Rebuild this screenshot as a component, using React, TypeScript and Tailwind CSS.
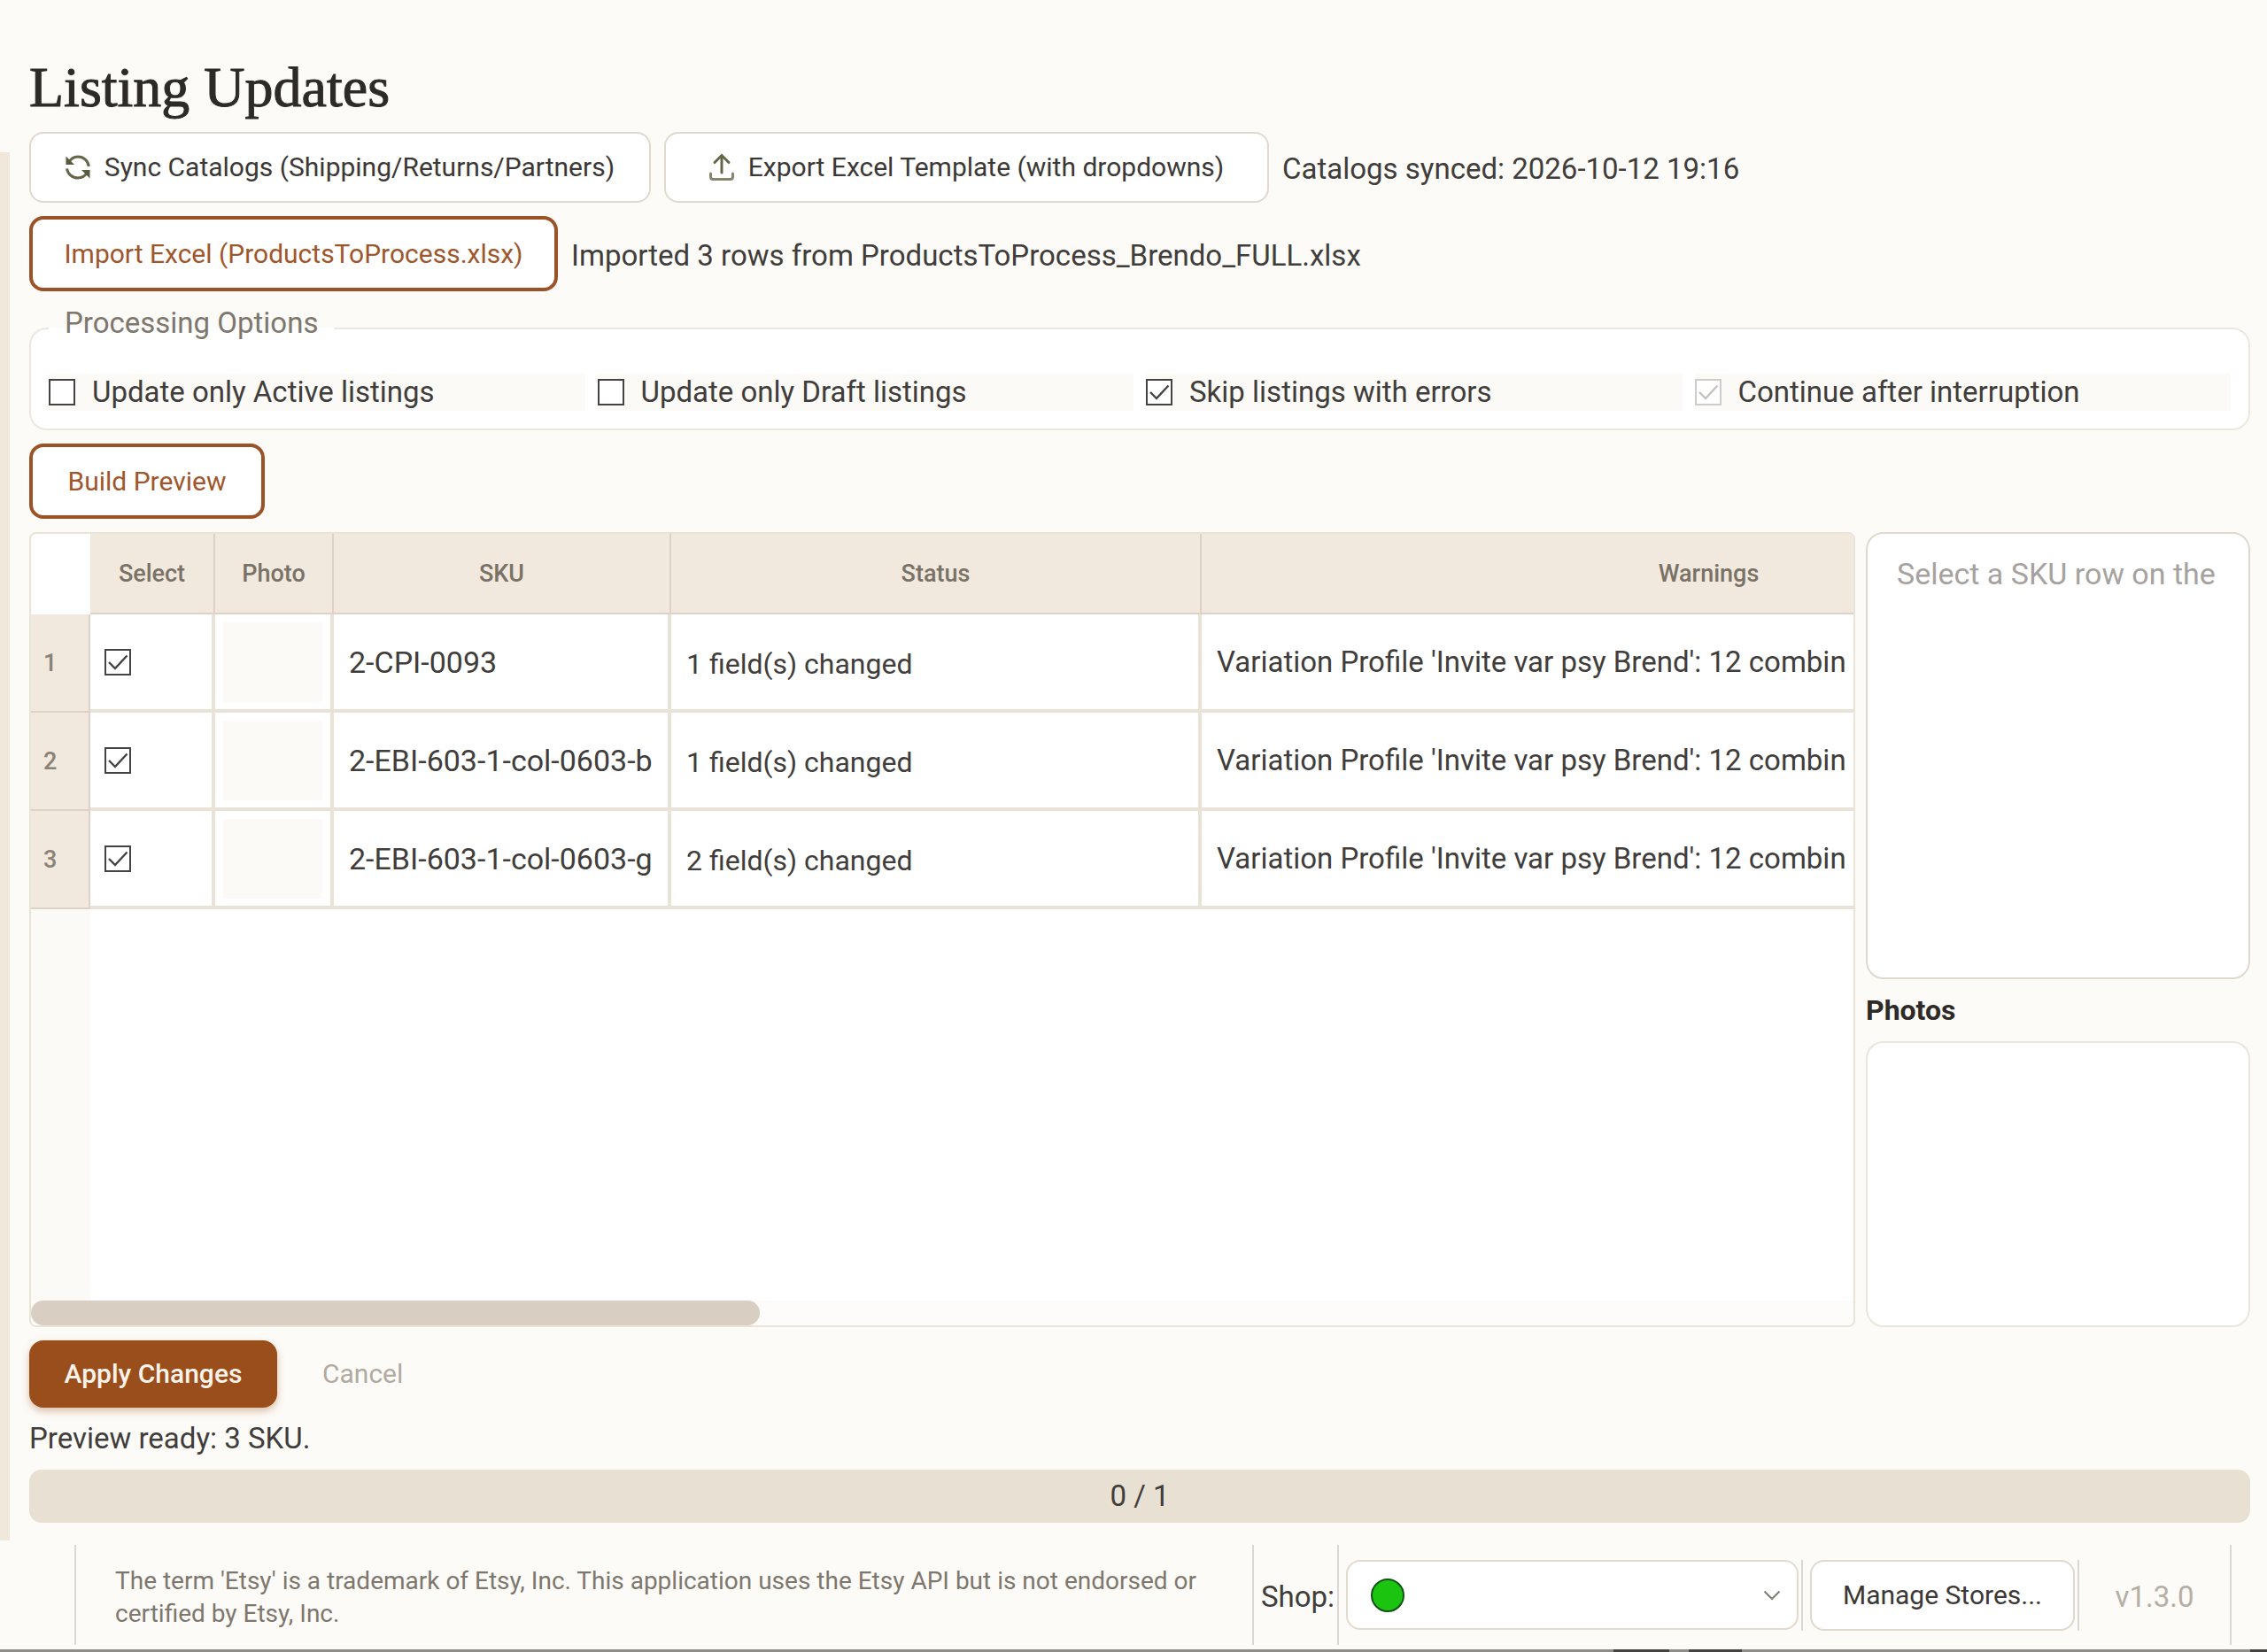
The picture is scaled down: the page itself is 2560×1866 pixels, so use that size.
import React from "react";

type Row = { sku: string; status: string; warning: string };

const rows: Row[] = [
  { sku: "2-CPI-0093", status: "1 field(s) changed", warning: "Variation Profile 'Invite var psy Brend': 12 combin" },
  { sku: "2-EBI-603-1-col-0603-b", status: "1 field(s) changed", warning: "Variation Profile 'Invite var psy Brend': 12 combin" },
  { sku: "2-EBI-603-1-col-0603-g", status: "2 field(s) changed", warning: "Variation Profile 'Invite var psy Brend': 12 combin" },
];

const options = [
  { label: "Update only Active listings", checked: false, disabled: false },
  { label: "Update only Draft listings", checked: false, disabled: false },
  { label: "Skip listings with errors", checked: true, disabled: false },
  { label: "Continue after interruption", checked: true, disabled: true },
];

function SyncIcon() {
  return (
    <svg className="size-7 shrink-0" viewBox="0 0 28 28" fill="none" aria-hidden="true">
      <path d="M3 9.5C5.500 4.500 9.500 2 14 2c6.500 0 11.500 4.500 12.300 11" stroke="#66664a" strokeWidth="3" />
      <path d="M1.500 15.500C2.500 21.500 7.500 26 14 26c4.500 0 8.500-2.500 11-7" stroke="#66664a" strokeWidth="3" />
      <path d="M.5 1.500V11H10z" fill="#5a5a3c" />
      <path d="M27.500 26.500V17H18z" fill="#5a5a3c" />
    </svg>
  );
}

function UploadIcon() {
  return (
    <svg className="h-8 w-7 shrink-0" viewBox="0 0 28 32" fill="none" strokeLinecap="round" aria-hidden="true">
      <path d="M14 22V3M6 10.500L14 2.500l8 8" stroke="#66664a" strokeWidth="3" />
      <path d="M1.500 23v3.500q0 3 3 3h19q3 0 3-3V23" stroke="#85856f" strokeWidth="3" />
    </svg>
  );
}

function CheckBox({ id, label, checked, disabled }: { id: string; label?: string; checked: boolean; disabled?: boolean }) {
  return (
    <span className="relative block size-[30px] shrink-0">
      <input
        id={id}
        type="checkbox"
        aria-label={label}
        defaultChecked={checked}
        disabled={disabled}
        className="peer block size-[30px] appearance-none border-2 border-[#454341] bg-white disabled:border-[#cfcdca]"
      />
      <svg
        viewBox="0 0 30 30"
        fill="none"
        aria-hidden="true"
        className="pointer-events-none absolute inset-0 hidden stroke-[#454341] peer-checked:block peer-disabled:stroke-[#c4c2bf]"
      >
        <path d="M5 15l7 7L25.500 7.500" strokeWidth="2.400" />
      </svg>
    </span>
  );
}

const outline = "flex h-20 items-center justify-center gap-4 rounded-2xl border-2 border-[#e0d9cd] bg-white text-[30px] text-[#3b3836]";
const accent = "h-[85px] rounded-2xl border-4 border-[#9c5227] bg-white text-[30px] text-[#a0562b]";
const head = "border-r-2 border-b-2 border-[#ddd2c5] bg-[#f1e9dd] text-[27px] font-medium text-[#7a7267]";
const cell = "border-r-4 border-b-4 border-[#e8e2d7] bg-white";

export default function App() {
  return (
    <div className="flex min-h-screen flex-col bg-[#fdfbf7] font-['Roboto','Liberation_Sans',sans-serif] text-[33px] leading-10 text-[#403d3b]">
      <div className="flex flex-1">
        <div className="mt-[172px] w-[11px] shrink-0 bg-[#f1e8dc]" />
        <main className="flex min-w-0 flex-1 flex-col gap-[15px] pt-16 pr-[19px] pb-5 pl-[22px]">
          <h1 className="font-['Liberation_Serif',serif] text-[64px] leading-[70px] text-[#2d2a28] [-webkit-text-stroke:1px_#2d2a28]">
            Listing Updates
          </h1>

          <div className="flex items-center gap-[15px]">
            <button type="button" className={`${outline} w-[702px]`}>
              <SyncIcon />
              Sync Catalogs (Shipping/Returns/Partners)
            </button>
            <button type="button" className={`${outline} w-[683px]`}>
              <UploadIcon />
              Export Excel Template (with dropdowns)
            </button>
            <p className="pt-1">Catalogs synced: 2026-10-12 19:16</p>
          </div>

          <div className="flex items-center gap-[15px]">
            <button type="button" className={`${accent} w-[597px]`}>Import Excel (ProductsToProcess.xlsx)</button>
            <p className="pt-1">Imported 3 rows from ProductsToProcess_Brendo_FULL.xlsx</p>
          </div>

          <fieldset className="rounded-[20px] border-2 border-[#ece8df] bg-white px-5 pb-5">
            <legend className="px-[18px] pb-3 leading-[42px] text-[#7d776e]">Processing Options</legend>
            <div className="grid grid-cols-4 gap-[14px] pt-6">
              {options.map((o, i) => (
                <label key={o.label} htmlFor={`opt-${i}`} className="flex h-[42px] items-center gap-[19px] bg-[#fcfaf7]">
                  <CheckBox id={`opt-${i}`} checked={o.checked} disabled={o.disabled} />
                  {o.label}
                </label>
              ))}
            </div>
          </fieldset>

          <div className="flex">
            <button type="button" className={`${accent} w-[266px]`}>Build Preview</button>
          </div>

          <div className="flex min-h-0 flex-1 gap-3">
            <div className="flex min-w-0 flex-1 flex-col overflow-hidden rounded-lg border-2 border-[#e9e3d8] bg-white">
              <table className="w-[2469px] table-fixed border-separate border-spacing-0">
                <colgroup>
                  <col className="w-[67px]" />
                  <col className="w-[141px]" />
                  <col className="w-[134px]" />
                  <col className="w-[381px]" />
                  <col className="w-[599px]" />
                  <col />
                </colgroup>
                <thead>
                  <tr className="h-[91px]">
                    <td />
                    <th scope="col" className={head}>Select</th>
                    <th scope="col" className={head}>Photo</th>
                    <th scope="col" className={head}>SKU</th>
                    <th scope="col" className={head}>Status</th>
                    <th scope="col" className={head}>Warnings</th>
                  </tr>
                </thead>
                <tbody>
                  {rows.map((r, i) => (
                    <tr key={r.sku} className="h-[111px]">
                      <th scope="row" className="border-r-2 border-b-2 border-[#ddd2c5] bg-[#f1e9dd] pl-3.5 text-left text-[27px] font-medium text-[#8a8276]">
                        {i + 1}
                      </th>
                      <td className={`${cell} pl-4`}>
                        <CheckBox id={`row-${i}`} label={`Select ${r.sku}`} checked />
                      </td>
                      <td className={cell}>
                        <div className="mx-auto h-[90px] w-28 bg-[#fcfaf7]" />
                      </td>
                      <td className={`${cell} pl-[17px] text-[34px] whitespace-nowrap`}>{r.sku}</td>
                      <td className={`${cell} pt-1 pl-[17px] text-[32px] whitespace-nowrap`}>{r.status}</td>
                      <td className={`${cell} pl-[17px] whitespace-nowrap`}>{r.warning}</td>
                    </tr>
                  ))}
                </tbody>
              </table>
              <div className="w-[67px] flex-1 bg-[#fcfaf6]" />
              <div className="h-7 bg-[#fdfcfa]">
                <div className="h-7 w-2/5 rounded-full bg-[#d8cec1]" />
              </div>
            </div>

            <div className="flex w-[434px] shrink-0 flex-col">
              <textarea
                aria-label="SKU details"
                placeholder="Select a SKU row on the"
                className="flex-1 resize-none rounded-[20px] border-2 border-[#e0d9cd] bg-white px-[33px] py-[25px] text-[34px] placeholder:text-[#a5a2a0]"
              />
              <h2 className="py-[15px] text-[32px] font-bold text-[#2d2a28]">Photos</h2>
              <div className="h-[323px] rounded-[20px] border-2 border-[#ebe6dc] bg-white" />
            </div>
          </div>

          <div className="flex items-center">
            <button type="button" className="h-[76px] w-[280px] rounded-2xl bg-[#9a4e1c] text-[30px] font-medium text-[#fdf3ea] shadow-[0_4px_8px_rgba(154,78,28,0.35)]">
              Apply Changes
            </button>
            <button type="button" disabled className="px-[51px] text-[30px] text-[#b0aaa1]">
              Cancel
            </button>
          </div>
          <p>Preview ready: 3 SKU.</p>
          <div role="progressbar" aria-valuemin={0} aria-valuemax={1} aria-valuenow={0} aria-label="Apply progress" className="flex h-[60px] items-center justify-center rounded-[14px] bg-[#e7e0d3]">
            0 / 1
          </div>
        </main>
      </div>

      <footer className="flex h-[123px] items-center pr-10 pl-[84px]">
        <div className="h-[113px] w-[2px] bg-[#dad8d5]" />
        <p className="flex-1 pt-1 pr-10 pl-[44px] text-[28px] leading-[37px] text-[#7d776e]">
          The term 'Etsy' is a trademark of Etsy, Inc. This application uses the Etsy API but is not endorsed or
          <br />
          certified by Etsy, Inc.
        </p>
        <div className="h-[113px] w-[2px] bg-[#dad8d5]" />
        <label htmlFor="shop" className="w-[94px] pt-1 pl-2">Shop:</label>
        <div className="h-[113px] w-[2px] bg-[#dad8d5]" />
        <div className="relative ml-2 w-[511px]">
          <select id="shop" className="block h-[79px] w-full appearance-none rounded-2xl border-2 border-[#e2dacf] bg-white pl-20">
            <option value=""></option>
          </select>
          <span className="pointer-events-none absolute top-1/2 left-7 size-[38px] -translate-y-1/2 rounded-full border-2 border-[#14521a] bg-[#1ac40f]" />
          <svg viewBox="0 0 20 12" fill="none" stroke="#7b8070" strokeWidth="2" className="pointer-events-none absolute top-1/2 right-5 h-3 w-5 -translate-y-1/2" aria-hidden="true">
            <path d="M1.500 1.500L10 10l8.500-8.500" />
          </svg>
        </div>
        <div className="ml-[3px] h-20 w-[2px] bg-[#dad8d5]" />
        <button type="button" className={`${outline} ml-2 w-[299px]`}>Manage Stores...</button>
        <div className="ml-[3px] h-20 w-[2px] bg-[#dad8d5]" />
        <p className="w-[170px] pt-1 text-center text-[#b5afa5]">v1.3.0</p>
        <div className="h-[113px] w-[2px] bg-[#dad8d5]" />
      </footer>
      <div className="flex h-[3px] justify-end bg-[#8f8d89]">
        <div className="w-[63px] bg-[#454341]" />
        <div className="mr-[574px] ml-[22px] w-[60px] bg-[#454341]" />
        <div className="w-[19px] bg-[#454341]" />
      </div>
    </div>
  );
}
